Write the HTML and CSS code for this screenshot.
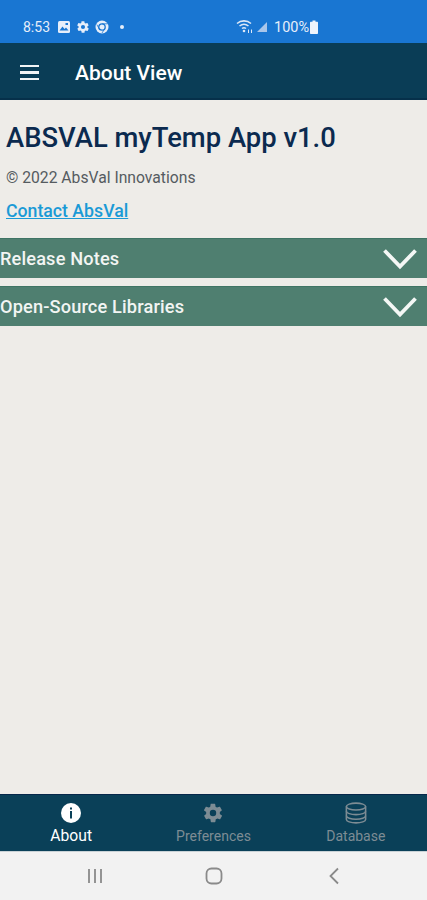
FILE: index.html
```html
<!DOCTYPE html>
<html lang="en">
<head>
  <meta charset="UTF-8">
  <meta name="viewport" content="width=device-width, initial-scale=1.0">
  <title>About View</title>
  <link rel="stylesheet" href="styles.css">
</head>
<body>
  <div class="status-bar">
    <span class="status-time">8:53</span>
    <svg class="status-icon" width="14" height="14" viewBox="0 0 14 14">
      <rect x="1" y="1" width="12" height="12" rx="1.5" fill="#e6eefa"/>
      <path d="M2.5 10.5 L5.5 6.5 L7.5 9 L9 7.5 L11.5 10.5Z" fill="#1976d2"/>
      <rect x="8.5" y="3" width="2.5" height="2" fill="#1976d2"/>
    </svg>
    <svg class="status-icon" width="14" height="14" viewBox="0 0 24 24">
      <path fill="#e6eefa" d="M19.4 13c.1-.3.1-.7.1-1s0-.7-.1-1l2.1-1.6c.2-.2.2-.4.1-.6l-2-3.5c-.1-.2-.4-.3-.6-.2l-2.5 1c-.5-.4-1.1-.7-1.7-1l-.4-2.6c0-.3-.2-.5-.5-.5h-4c-.3 0-.5.2-.5.4l-.4 2.7c-.6.2-1.1.6-1.7 1l-2.5-1c-.2-.1-.5 0-.6.2l-2 3.5c-.1.2-.1.5.1.6L4.6 11c-.1.3-.1.7-.1 1s0 .7.1 1l-2.1 1.6c-.2.2-.2.4-.1.6l2 3.5c.1.2.4.3.6.2l2.5-1c.5.4 1.1.7 1.7 1l.4 2.6c0 .3.2.5.5.5h4c.3 0 .5-.2.5-.4l.4-2.7c.6-.2 1.1-.6 1.7-1l2.5 1c.2.1.5 0 .6-.2l2-3.5c.1-.2.1-.5-.1-.6zM12 15.5a3.5 3.5 0 1 1 0-7 3.5 3.5 0 0 1 0 7z"/>
    </svg>
    <svg class="status-icon" width="14" height="14" viewBox="0 0 14 14">
      <circle cx="7" cy="7" r="6.5" fill="#e6eefa"/>
      <circle cx="7" cy="7" r="3.2" fill="none" stroke="#1976d2" stroke-width="1.3"/>
      <path d="M7 3.8H12.5M4.2 8.8L1.8 4.5M9.8 8.5L7 13" stroke="#1976d2" stroke-width="0.8"/>
    </svg>
    <span class="status-dot"></span>
    <svg class="status-wifi" width="18" height="14" viewBox="0 0 18 14">
      <path d="M1 3.5C5 0 11 0 15 3.5M3.5 6C6.5 3.6 9.5 3.6 12.5 6M6 8.5C7.5 7.3 8.5 7.3 10 8.5" fill="none" stroke="#dce8f7" stroke-width="1.6"/>
      <circle cx="8" cy="11" r="1.3" fill="#dce8f7"/>
      <path d="M12.5 9.5v3.5M15.5 13V9.5" stroke="#dce8f7" stroke-width="1"/>
    </svg>
    <svg class="status-signal" width="12" height="12" viewBox="0 0 12 12">
      <path d="M11 1V11H1Z" fill="#a9c6ea"/>
    </svg>
    <span class="status-pct">100%</span>
    <svg class="status-battery" width="10" height="14" viewBox="0 0 10 14">
      <path d="M3.5 0.5h3v1.2h1.5c.6 0 1 .4 1 1V13c0 .6-.4 1-1 1H2c-.6 0-1-.4-1-1V2.7c0-.6.4-1 1-1h1.5z" fill="#eef4fc"/>
    </svg>
  </div>

  <header class="app-bar">
    <div class="menu-icon"><span></span><span></span><span></span></div>
    <div class="app-title">About View</div>
  </header>

  <main class="content">
    <div class="about-head">
      <h1>ABSVAL myTemp App v1.0</h1>
      <p class="copyright">© 2022 AbsVal Innovations</p>
      <a class="contact" href="#">Contact AbsVal</a>
    </div>
    <div class="panel">
      <span>Release Notes</span>
      <svg width="36" height="24" viewBox="0 0 36 24"><path d="M2.5 3.5L18 19.5L33.5 3.500" fill="none" stroke="#f4f7f5" stroke-width="3.8"/></svg>
    </div>
    <div class="panel">
      <span>Open-Source Libraries</span>
      <svg width="36" height="24" viewBox="0 0 36 24"><path d="M2.5 3.5L18 19.5L33.5 3.500" fill="none" stroke="#f4f7f5" stroke-width="3.8"/></svg>
    </div>
  </main>

  <nav class="tabs">
    <div class="tab active">
      <svg width="22" height="22" viewBox="0 0 22 22">
        <circle cx="11" cy="11" r="10" fill="#ffffff"/>
        <rect x="10" y="9" width="2" height="7.5" fill="#0a4058"/>
        <rect x="10" y="5.5" width="2" height="2" fill="#0a4058"/>
      </svg>
      <span>About</span>
    </div>
    <div class="tab">
      <svg width="22" height="22" viewBox="0 0 24 24">
        <path fill="#7d8c94" d="M19.4 13c.1-.3.1-.7.1-1s0-.7-.1-1l2.1-1.6c.2-.2.2-.4.1-.6l-2-3.5c-.1-.2-.4-.3-.6-.2l-2.5 1c-.5-.4-1.1-.7-1.7-1l-.4-2.6c0-.3-.2-.5-.5-.5h-4c-.3 0-.5.2-.5.4l-.4 2.7c-.6.2-1.1.6-1.7 1l-2.5-1c-.2-.1-.5 0-.6.2l-2 3.5c-.1.2-.1.5.1.6L4.6 11c-.1.3-.1.7-.1 1s0 .7.1 1l-2.1 1.6c-.2.2-.2.4-.1.6l2 3.5c.1.2.4.3.6.2l2.5-1c.5.4 1.1.7 1.7 1l.4 2.6c0 .3.2.5.5.5h4c.3 0 .5-.2.5-.4l.4-2.7c.6-.2 1.1-.6 1.7-1l2.5 1c.2.1.5 0 .6-.2l2-3.5c.1-.2.1-.5-.1-.6zM12 15.5a3.5 3.5 0 1 1 0-7 3.5 3.5 0 0 1 0 7z"/>
      </svg>
      <span>Preferences</span>
    </div>
    <div class="tab">
      <svg width="24" height="24" viewBox="0 0 24 24" fill="none" stroke="#7d8c94" stroke-width="1.7">
        <ellipse cx="12" cy="5" rx="10.5" ry="3.8"/>
        <path d="M1.5 5V19C1.5 21.1 6.2 22.8 12 22.8S22.5 21.1 22.5 19V5"/>
        <path d="M1.5 10C1.5 12.1 6.2 13.8 12 13.8S22.5 12.1 22.5 10"/>
        <path d="M1.5 15C1.5 17.1 6.2 18.8 12 18.8S22.5 17.1 22.5 15"/>
      </svg>
      <span>Database</span>
    </div>
  </nav>

  <div class="sys-nav">
    <svg width="18" height="16" viewBox="0 0 18 16"><path d="M3 1V15M9 1V15M15 1V15" stroke="#8a8a8a" stroke-width="1.8"/></svg>
    <svg width="18" height="18" viewBox="0 0 18 18"><rect x="1.5" y="1.5" width="15" height="15" rx="5" fill="none" stroke="#8a8a8a" stroke-width="1.8"/></svg>
    <svg width="12" height="18" viewBox="0 0 12 18"><path d="M10 1.5L2.5 9L10 16.5" fill="none" stroke="#8a8a8a" stroke-width="1.8"/></svg>
  </div>
</body>
</html>
```

FILE: styles.css
```css
body {
  margin: 0;
  width: 427px;
  height: 900px;
  display: flex;
  flex-direction: column;
  overflow: hidden;
  font-family: Roboto, "Liberation Sans", sans-serif;
  background-color: #eeece8;
}

.status-bar {
  height: 43px;
  flex: none;
  box-sizing: border-box;
  padding: 11px 0 0 23px;
  display: flex;
  align-items: center;
  background-color: #1976d2;
  color: #e6eefa;
  font-size: 14px;
}
.status-time {
  margin-right: 7px;
}
.status-icon {
  margin-right: 5px;
}
.status-dot {
  width: 4px;
  height: 4px;
  margin-left: 6px;
  border-radius: 50%;
  background-color: #e6eefa;
}
.status-wifi {
  margin-left: 112px;
}
.status-signal {
  margin-left: 2px;
}
.status-pct {
  margin-left: 6px;
  font-size: 14.5px;
}

.app-bar {
  height: 57px;
  flex: none;
  box-sizing: border-box;
  display: flex;
  align-items: center;
  padding: 4px 0 0 20px;
  background-color: #0a3d56;
  border-bottom: 2px solid #06304a;
  color: #ffffff;
}
.menu-icon {
  width: 19px;
  display: flex;
  flex-direction: column;
  gap: 4px;
  margin-right: 36px;
}
.menu-icon span {
  height: 2.5px;
  background-color: #f1f4f5;
}
.app-title {
  font-size: 21px;
  font-weight: 500;
}

.content {
  flex: 1;
}
.about-head {
  padding: 22px 6px 0;
  height: 138px;
  box-sizing: border-box;
}
h1 {
  margin: 0;
  font-size: 27.4px;
  font-weight: 500;
  line-height: 32px;
  color: #0b2a4f;
}
.copyright {
  margin: 15px 0 0;
  font-size: 15.7px;
  line-height: 18px;
  color: #555b60;
}
.contact {
  display: inline-block;
  margin-top: 15px;
  font-size: 17.7px;
  font-weight: 500;
  line-height: 19px;
  color: #1a9ad6;
}
.panel {
  height: 40px;
  margin-bottom: 8px;
  box-sizing: border-box;
  display: flex;
  align-items: center;
  justify-content: space-between;
  padding: 0 9px 0 0;
  background-color: #4f7f70;
  border-top: 1px solid #3f7464;
  color: #f2f5f3;
  font-size: 18.2px;
  font-weight: 500;
  letter-spacing: 0.15px;
}

.tabs {
  height: 57px;
  flex: none;
  box-sizing: border-box;
  display: grid;
  grid-template-columns: repeat(3, 1fr);
  background-color: #0a4058;
  border-top: 1px solid #06274a;
}
.tab {
  display: flex;
  flex-direction: column;
  align-items: center;
  padding-top: 7px;
  gap: 4px;
  color: #7d8c94;
  font-size: 14px;
  line-height: 16px;
}
.tab svg {
  height: 22px;
}
.tab.active {
  color: #ffffff;
  font-size: 15.7px;
}

.sys-nav {
  height: 49px;
  flex: none;
  box-sizing: border-box;
  display: grid;
  grid-template-columns: repeat(3, 1fr);
  justify-items: center;
  align-items: center;
  padding: 0 33px 0 35px;
  background-color: #f2f2f2;
  border-top: 1px solid #c9d2d6;
}
```
